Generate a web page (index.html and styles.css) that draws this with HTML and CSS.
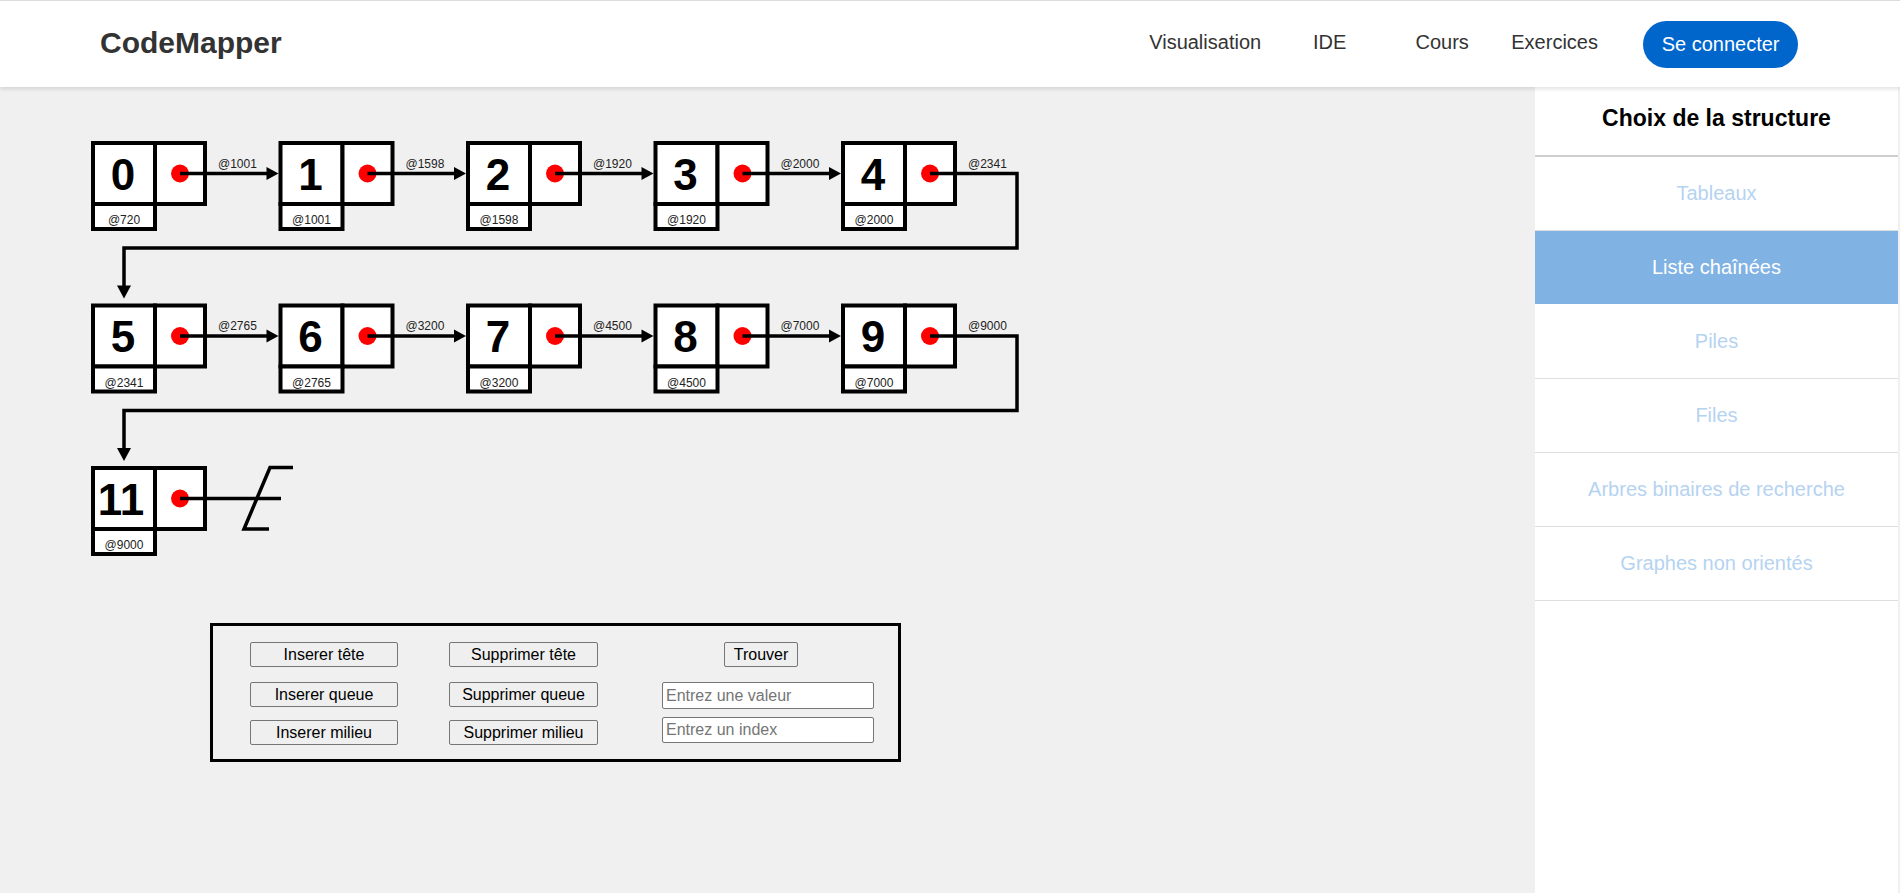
FILE: index.html
```html
<!DOCTYPE html>
<html lang="fr">
<head>
<meta charset="utf-8">
<title>CodeMapper</title>
<link rel="stylesheet" href="styles.css">
</head>
<body>
<header class="topbar">
  <div class="logo">CodeMapper</div>
  <nav class="nav">
    <a class="nav-link">Visualisation</a>
    <a class="nav-link">IDE</a>
    <a class="nav-link">Cours</a>
    <a class="nav-link">Exercices</a>
    <a class="login">Se connecter</a>
  </nav>
</header>
<div class="layout">
  <main class="workspace">
    <svg class="diagram" width="1100" height="520" viewBox="0 87 1100 520" xmlns="http://www.w3.org/2000/svg">
      <!-- row 1 -->
      <g transform="translate(93 143)"><rect class="cell" x="0" y="0" width="62" height="61"/><rect class="cell" x="62" y="0" width="50" height="61"/><rect class="cell" x="0" y="61" width="62" height="25"/><circle class="ptr" cx="87" cy="30.5" r="9"/><text class="val" x="30" y="46.5">0</text><text class="addr" x="31" y="81">@720</text></g>
      <g transform="translate(280.5 143)"><rect class="cell" x="0" y="0" width="62" height="61"/><rect class="cell" x="62" y="0" width="50" height="61"/><rect class="cell" x="0" y="61" width="62" height="25"/><circle class="ptr" cx="87" cy="30.5" r="9"/><text class="val" x="30" y="46.5">1</text><text class="addr" x="31" y="81">@1001</text></g>
      <g transform="translate(468 143)"><rect class="cell" x="0" y="0" width="62" height="61"/><rect class="cell" x="62" y="0" width="50" height="61"/><rect class="cell" x="0" y="61" width="62" height="25"/><circle class="ptr" cx="87" cy="30.5" r="9"/><text class="val" x="30" y="46.5">2</text><text class="addr" x="31" y="81">@1598</text></g>
      <g transform="translate(655.5 143)"><rect class="cell" x="0" y="0" width="62" height="61"/><rect class="cell" x="62" y="0" width="50" height="61"/><rect class="cell" x="0" y="61" width="62" height="25"/><circle class="ptr" cx="87" cy="30.5" r="9"/><text class="val" x="30" y="46.5">3</text><text class="addr" x="31" y="81">@1920</text></g>
      <g transform="translate(843 143)"><rect class="cell" x="0" y="0" width="62" height="61"/><rect class="cell" x="62" y="0" width="50" height="61"/><rect class="cell" x="0" y="61" width="62" height="25"/><circle class="ptr" cx="87" cy="30.5" r="9"/><text class="val" x="30" y="46.5">4</text><text class="addr" x="31" y="81">@2000</text></g>
      <!-- row 2 -->
      <g transform="translate(93 305.5)"><rect class="cell" x="0" y="0" width="62" height="61"/><rect class="cell" x="62" y="0" width="50" height="61"/><rect class="cell" x="0" y="61" width="62" height="25"/><circle class="ptr" cx="87" cy="30.5" r="9"/><text class="val" x="30" y="46.5">5</text><text class="addr" x="31" y="81">@2341</text></g>
      <g transform="translate(280.5 305.5)"><rect class="cell" x="0" y="0" width="62" height="61"/><rect class="cell" x="62" y="0" width="50" height="61"/><rect class="cell" x="0" y="61" width="62" height="25"/><circle class="ptr" cx="87" cy="30.5" r="9"/><text class="val" x="30" y="46.5">6</text><text class="addr" x="31" y="81">@2765</text></g>
      <g transform="translate(468 305.5)"><rect class="cell" x="0" y="0" width="62" height="61"/><rect class="cell" x="62" y="0" width="50" height="61"/><rect class="cell" x="0" y="61" width="62" height="25"/><circle class="ptr" cx="87" cy="30.5" r="9"/><text class="val" x="30" y="46.5">7</text><text class="addr" x="31" y="81">@3200</text></g>
      <g transform="translate(655.5 305.5)"><rect class="cell" x="0" y="0" width="62" height="61"/><rect class="cell" x="62" y="0" width="50" height="61"/><rect class="cell" x="0" y="61" width="62" height="25"/><circle class="ptr" cx="87" cy="30.5" r="9"/><text class="val" x="30" y="46.5">8</text><text class="addr" x="31" y="81">@4500</text></g>
      <g transform="translate(843 305.5)"><rect class="cell" x="0" y="0" width="62" height="61"/><rect class="cell" x="62" y="0" width="50" height="61"/><rect class="cell" x="0" y="61" width="62" height="25"/><circle class="ptr" cx="87" cy="30.5" r="9"/><text class="val" x="30" y="46.5">9</text><text class="addr" x="31" y="81">@7000</text></g>
      <!-- row 3 -->
      <g transform="translate(93 468)"><rect class="cell" x="0" y="0" width="62" height="61"/><rect class="cell" x="62" y="0" width="50" height="61"/><rect class="cell" x="0" y="61" width="62" height="25"/><circle class="ptr" cx="87" cy="30.5" r="9"/><text class="val" x="28" y="46.5">11</text><text class="addr" x="31" y="81">@9000</text></g>

      <!-- links row 1 -->
      <g transform="translate(93 143)"><line class="wire" x1="87" y1="30.5" x2="176" y2="30.5"/><polygon class="head" points="173.5,24 185.5,30.5 173.5,37"/><text class="lbl" x="125" y="24.5">@1001</text></g>
      <g transform="translate(280.5 143)"><line class="wire" x1="87" y1="30.5" x2="176" y2="30.5"/><polygon class="head" points="173.5,24 185.5,30.5 173.5,37"/><text class="lbl" x="125" y="24.5">@1598</text></g>
      <g transform="translate(468 143)"><line class="wire" x1="87" y1="30.5" x2="176" y2="30.5"/><polygon class="head" points="173.5,24 185.5,30.5 173.5,37"/><text class="lbl" x="125" y="24.5">@1920</text></g>
      <g transform="translate(655.5 143)"><line class="wire" x1="87" y1="30.5" x2="176" y2="30.5"/><polygon class="head" points="173.5,24 185.5,30.5 173.5,37"/><text class="lbl" x="125" y="24.5">@2000</text></g>
      <g><polyline class="wire" points="930,173.5 1017,173.5 1017,248 124,248 124,286"/><polygon class="head" points="117,285.5 131,285.5 124,298.5"/><text class="lbl" x="968" y="167.5">@2341</text></g>
      <!-- links row 2 -->
      <g transform="translate(93 305.5)"><line class="wire" x1="87" y1="30.5" x2="176" y2="30.5"/><polygon class="head" points="173.5,24 185.5,30.5 173.5,37"/><text class="lbl" x="125" y="24.5">@2765</text></g>
      <g transform="translate(280.5 305.5)"><line class="wire" x1="87" y1="30.5" x2="176" y2="30.5"/><polygon class="head" points="173.5,24 185.5,30.5 173.5,37"/><text class="lbl" x="125" y="24.5">@3200</text></g>
      <g transform="translate(468 305.5)"><line class="wire" x1="87" y1="30.5" x2="176" y2="30.5"/><polygon class="head" points="173.5,24 185.5,30.5 173.5,37"/><text class="lbl" x="125" y="24.5">@4500</text></g>
      <g transform="translate(655.5 305.5)"><line class="wire" x1="87" y1="30.5" x2="176" y2="30.5"/><polygon class="head" points="173.5,24 185.5,30.5 173.5,37"/><text class="lbl" x="125" y="24.5">@7000</text></g>
      <g><polyline class="wire" points="930,336 1017,336 1017,410.5 124,410.5 124,448.5"/><polygon class="head" points="117,448 131,448 124,461"/><text class="lbl" x="968" y="330">@9000</text></g>
      <!-- null terminator -->
      <g><line class="wire" x1="180" y1="498.5" x2="281" y2="498.5"/><polyline class="wire" points="293,467.5 270,467.5 244,529 269,529"/></g>
    </svg>

    <div class="controls">
      <button class="btn col-a row-1">Inserer tête</button>
      <button class="btn col-b row-1">Supprimer tête</button>
      <button class="btn find row-1">Trouver</button>
      <button class="btn col-a row-2">Inserer queue</button>
      <button class="btn col-b row-2">Supprimer queue</button>
      <input class="field col-c row-2" type="text" placeholder="Entrez une valeur">
      <button class="btn col-a row-3">Inserer milieu</button>
      <button class="btn col-b row-3">Supprimer milieu</button>
      <input class="field col-c row-3" type="text" placeholder="Entrez un index">
    </div>
  </main>

  <aside class="sidebar">
    <div class="side-title">Choix de la structure</div>
    <div class="side-item">Tableaux</div>
    <div class="side-item active">Liste chaînées</div>
    <div class="side-item">Piles</div>
    <div class="side-item">Files</div>
    <div class="side-item">Arbres binaires de recherche</div>
    <div class="side-item">Graphes non orientés</div>
  </aside>
</div>
</body>
</html>
```

FILE: styles.css
```css
* { box-sizing: border-box; }

html, body {
  margin: 0;
  padding: 0;
}

body {
  background: #f0f0f0;
  font-family: "Liberation Sans", Arial, sans-serif;
  color: #333;
  overflow: hidden;
}

/* ---------- header ---------- */
.topbar {
  position: relative;
  z-index: 2;
  height: 87px;
  border-top: 1px solid #dcdcdc;
  background: #fff;
  box-shadow: 0 2px 4px rgba(0, 0, 0, 0.12);
  display: flex;
  align-items: center;
  justify-content: space-between;
  padding: 0 102px 0 100px;
}

.logo {
  font-size: 30px;
  font-weight: bold;
  color: #333;
  margin-bottom: 2px;
}

.nav {
  display: flex;
  align-items: center;
  gap: 12.5px;
}

.nav-link {
  min-width: 100px;
  padding: 0 6px;
  text-align: center;
  font-size: 20px;
  color: #333;
  margin-bottom: 4px;
}

.login {
  margin-left: 26px;
  background: #0066cc;
  color: #fff;
  font-size: 20px;
  height: 47px;
  line-height: 47px;
  padding: 0 18.5px;
  border-radius: 24px;
}

/* ---------- layout ---------- */
.layout {
  display: flex;
  height: 806px;
}

.workspace {
  flex: 1;
  min-width: 0;
}

.diagram {
  display: block;
  font-family: "Liberation Sans", Arial, sans-serif;
}

.cell {
  fill: #fff;
  stroke: #000;
  stroke-width: 4;
}

.ptr { fill: #ff0000; }

.wire {
  fill: none;
  stroke: #000;
  stroke-width: 3.5;
}

.head { fill: #000; }

.val {
  font-size: 44px;
  font-weight: bold;
  text-anchor: middle;
  fill: #000;
}

.addr {
  font-size: 12px;
  text-anchor: middle;
  fill: #222;
}

.lbl {
  font-size: 12px;
  fill: #222;
}

/* ---------- control panel ---------- */
.controls {
  margin: 16px 0 0 210px;
  width: 691px;
  height: 139px;
  border: 3px solid #000;
  padding: 16px 0 0 37px;
  display: grid;
  grid-template-columns: 148px 51px 149px 64px 212px;
  grid-template-rows: 25px 15px 27px 8px 27px;
  align-items: start;
}

.col-a { grid-column: 1; }
.col-b { grid-column: 3; }
.col-c { grid-column: 5; }
.row-1 { grid-row: 1; }
.row-2 { grid-row: 3; }
.row-3 { grid-row: 5; }
.btn.row-3 { margin-top: 3px; }

.btn {
  width: 100%;
  height: 25px;
  padding: 0;
  border: 1px solid #767676;
  border-radius: 2px;
  background: #efefef;
  font-family: "Liberation Sans", Arial, sans-serif;
  font-size: 16px;
  color: #000;
}

.find {
  grid-column: 5;
  justify-self: start;
  margin-left: 62px;
  width: 74px;
}

.field {
  width: 100%;
  height: 27px;
  padding: 0 3px;
  border: 1px solid #767676;
  border-radius: 2px;
  background: #fff;
  font-family: "Liberation Sans", Arial, sans-serif;
  font-size: 16px;
  color: #000;
}

.field.row-3 { height: 26px; }

.field::placeholder { color: #757575; }

/* ---------- sidebar ---------- */
.sidebar {
  width: 363px;
  margin-right: 2px;
  background: #fff;
}

.side-title {
  height: 70px;
  line-height: 63px;
  padding-bottom: 5px;
  border-bottom: 2px solid #cfcfcf;
  text-align: center;
  font-size: 23px;
  font-weight: bold;
  color: #000;
}

.side-item {
  height: 74px;
  line-height: 73px;
  border-bottom: 1px solid #dedede;
  text-align: center;
  font-size: 20px;
  color: #b5d3f1;
}

.side-item.active {
  background: #80b2e4;
  color: #fff;
  border-bottom-color: #fff;
}
```
